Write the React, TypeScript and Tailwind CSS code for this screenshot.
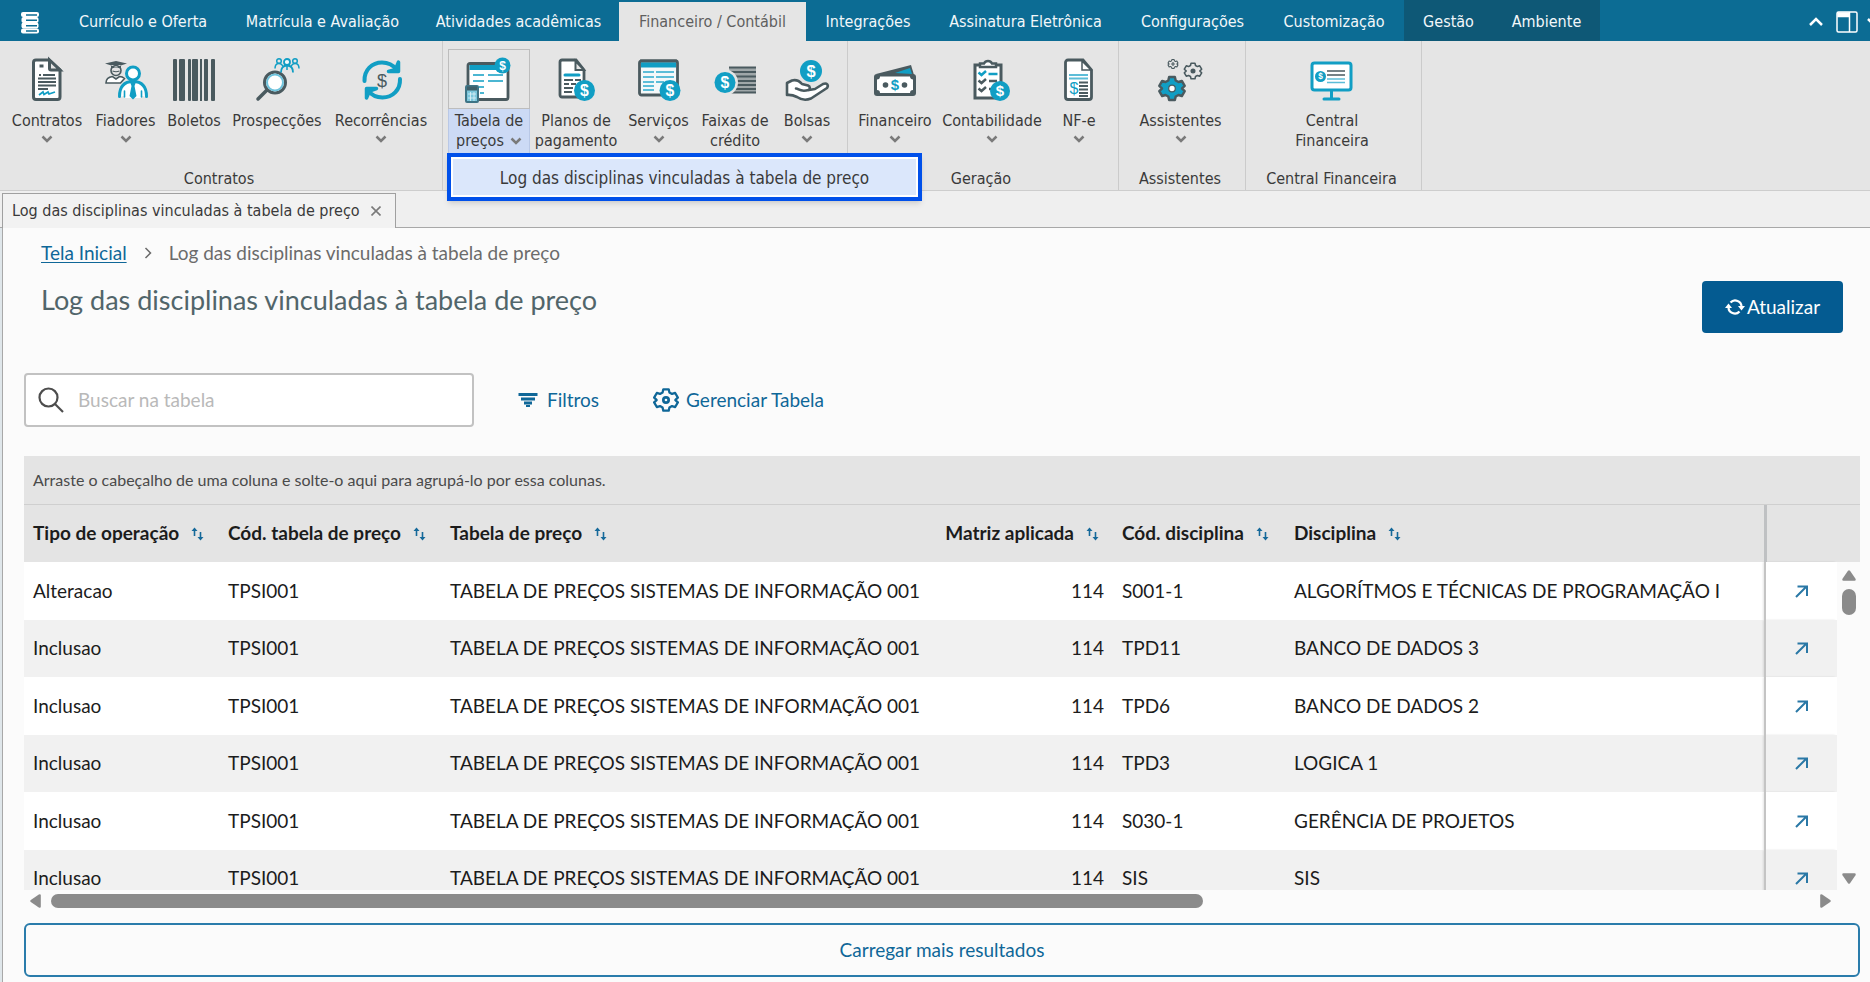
import React from 'react';

const DARK = '#4a5a5f';
const TEAL = '#119ec4';

interface CoinProps {
  cx: number;
  cy: number;
  r: number;
}

const Coin: React.FC<CoinProps> = ({ cx, cy, r }) => (
  <g>
    <circle cx={cx} cy={cy} r={r} fill={TEAL} />
    <text
      x={cx}
      y={cy + r * 0.52}
      fontSize={r * 1.5}
      fontWeight="bold"
      fill="#fff"
      textAnchor="middle"
      fontFamily="'Liberation Sans', sans-serif"
    >
      $
    </text>
  </g>
);

const IconBox: React.FC<{ children: React.ReactNode }> = ({ children }) => (
  <svg viewBox="0 0 44 44" className="h-11 w-11 overflow-visible" fill="none" aria-hidden="true">
    {children}
  </svg>
);

const ContractIcon = () => (
  <IconBox>
    <path d="M11 3h13l11 10v27a2.500 2.500 0 0 1-2.500 2.500H11A2.500 2.500 0 0 1 8.500 40V5.500A2.500 2.500 0 0 1 11 3z" fill="#fff" stroke={DARK} strokeWidth="3" />
    <path d="M24.500 3v8.500a1.500 1.500 0 0 0 1.500 1.500h9z" fill="#e5e5e5" stroke={DARK} strokeWidth="3" />
    <path d="M14.500 9h4" stroke={DARK} strokeWidth="3" />
    <path d="M14 18h2M18 18h12M13 21.500h18M13 25h18M13 28.500h18M13 32h10" stroke={DARK} strokeWidth="1.800" />
    <path d="M14 38l4-3 1 2.500 4-2.500 1 2 6-2" stroke={TEAL} strokeWidth="1.800" />
  </IconBox>
);

const GuarantorIcon = () => (
  <IconBox>
    <circle cx="12" cy="13.500" r="5" fill="#e5e5e5" stroke={DARK} strokeWidth="1.600" />
    <path d="M1 6.500L12 4l11 2.500L12 10zM7 8v4c3-2 7-2 10 0V8z" fill={DARK} />
    <path d="M8.500 14q3.500 1.500 7 0" stroke={DARK} strokeWidth="1.200" />
    <path d="M2 26c0-4.500 3-6 6.500-6.500l3.500 2.500 3.500-2.500c2 0 4 1 5 2l-4 4.500z" fill="#fff" stroke={DARK} strokeWidth="1.600" />
    <path d="M15.500 40c0-10 4-15.500 13.500-15.500S42.500 30 42.500 40l-4.500-1v2H20v-2z" fill="#fff" />
    <path d="M15.500 39.500c0-10 4-15 13.500-15s13.500 5 13.500 15" stroke={TEAL} strokeWidth="3" strokeLinecap="round" />
    <path d="M20.500 34v6M37.500 34v6" stroke={TEAL} strokeWidth="1.600" strokeLinecap="round" />
    <path d="M26 25h6l-1.500 4 2 10L29 42.500 25.500 39l2-10z" fill={TEAL} />
    <circle cx="29" cy="16.500" r="6.500" fill="#fff" stroke={TEAL} strokeWidth="3" />
  </IconBox>
);

const BarcodeIcon = () => (
  <IconBox>
    <g fill={DARK}>
      <rect x="1" y="2" width="4" height="42" rx="1" />
      <rect x="7" y="2" width="6" height="42" rx="1" />
      <rect x="16" y="2" width="3" height="42" rx="1" />
      <rect x="20" y="2" width="6" height="42" rx="1" />
      <rect x="28" y="2" width="2" height="42" />
      <rect x="32" y="2" width="4" height="42" rx="1" />
      <rect x="39" y="2" width="4" height="42" rx="1" />
    </g>
  </IconBox>
);

const ProspectIcon = () => (
  <IconBox>
    <path d="M3 42l9-9" stroke={DARK} strokeWidth="3.500" strokeLinecap="round" />
    <circle cx="20" cy="25.500" r="10.500" fill="#fff" stroke={DARK} strokeWidth="3" />
    <circle cx="20" cy="25.500" r="8" stroke="#6fc3dc" strokeWidth="2" />
    <g stroke={TEAL} strokeWidth="1.500">
      <circle cx="24" cy="4" r="2.300" />
      <path d="M20 11.500c0-3 1-5 4-5s3 1 4 3" />
      <circle cx="40" cy="4" r="2.300" />
      <path d="M44 11.500c0-3-1-5-4-5s-3 1-4 3" />
      <circle cx="32" cy="5" r="3" fill="#f4fbfd" strokeWidth="1.800" />
      <path d="M26 15.500c0-4.500 2-7 6-7s6 2.500 6 7" strokeWidth="1.800" />
      <path d="M32 9v4" />
    </g>
  </IconBox>
);

const RecurrenceIcon = () => (
  <IconBox>
    <path d="M5.500 24C5 13 13 5.500 23 5.500c6 0 11 2.500 14.500 7" stroke={TEAL} strokeWidth="4" strokeLinecap="round" />
    <path d="M41 22c.5 11-7.500 18.500-17.500 18.500-6 0-11-2.500-14.500-7" stroke={TEAL} strokeWidth="4" strokeLinecap="round" />
    <path d="M39.500 5v9.500h-10l7-2z" fill={TEAL} stroke={TEAL} strokeWidth="3.500" strokeLinejoin="round" />
    <path d="M7.500 41v-9.500h10l-7 2.500z" fill={TEAL} stroke={TEAL} strokeWidth="3.500" strokeLinejoin="round" />
    <text x="23" y="30" fontSize="18" fill={DARK} textAnchor="middle" fontFamily="'Liberation Sans', sans-serif">$</text>
  </IconBox>
);

const PriceTableIcon = () => (
  <IconBox>
    <rect x="1" y="6.500" width="40" height="36" rx="2" fill="#fff" stroke={DARK} strokeWidth="2.800" />
    <path d="M2.500 10.500h37" stroke={TEAL} strokeWidth="5" />
    <path d="M6 18h11M21 18h15M6 24h11M21 24h15M12 30h5M13 36h4" stroke={TEAL} strokeWidth="1.600" />
    <rect x="-1" y="29" width="12" height="16" rx="1" fill="#7cc7dc" stroke="#3e7485" strokeWidth="2" />
    <path d="M0 31.500h10" stroke="#3e5f69" strokeWidth="4" />
    <path d="M1 37h8M1 41h8M3.500 35v9M7 35v9" stroke="#dff3f8" strokeWidth="0.800" />
    <Coin cx={35.5} cy={8.5} r={8} />
  </IconBox>
);

const PaymentPlanIcon = () => (
  <IconBox>
    <path d="M8 3h14l8 10v25.500a1.500 1.500 0 0 1-1.500 1.500H8A2 2 0 0 1 6 38V5a2 2 0 0 1 2-2z" fill="#fff" stroke={DARK} strokeWidth="2.800" />
    <path d="M21.500 4v9H30z" fill="#e5e5e5" stroke={DARK} strokeWidth="2" />
    <path d="M11 18h14" stroke={TEAL} strokeWidth="3" strokeLinecap="round" />
    <path d="M10 23h9M21 23h6M10 27h5M17 27h5M10 31h9M10 35h8" stroke={DARK} strokeWidth="2" />
    <Coin cx={30.5} cy={33.5} r={10.5} />
  </IconBox>
);

const ServiceIcon = () => (
  <IconBox>
    <rect x="2.500" y="4" width="38" height="34" rx="2" fill="#f4f8f9" stroke={DARK} strokeWidth="2.800" />
    <path d="M3 4h37" stroke={DARK} strokeWidth="3" />
    <path d="M4 8h35" stroke={TEAL} strokeWidth="5" />
    <path d="M6 15h11M19 15h18M6 20h11M19 20h18M6 25h11M19 25h8M6 29h11M6 33h11" stroke="#5cbdd8" strokeWidth="1.800" />
    <Coin cx={33} cy={33.5} r={10.5} />
  </IconBox>
);

const CreditRangeIcon = () => (
  <IconBox>
    <path d="M16 10h27v26H18z" fill={DARK} opacity="0.450" />
    <path d="M16 10.500h27M16 15h27M16 19.500h27M16 24h27M16 28h27M16 32h27M16 35.500h27" stroke={DARK} strokeWidth="2.200" />
    <circle cx="12" cy="25.500" r="13" fill="#e5e5e5" />
    <Coin cx={12} cy={25.5} r={10.5} />
  </IconBox>
);

const ScholarshipIcon = () => (
  <IconBox>
    <path d="M2 38V26l5-2.500c4-1 7 0 10 3.500l6 1.500c2.500 1 2 3.500 1 4.500L30 32l8-5c4-1.500 6 1 4 4L26 41.500c-5 2-9 2-14-1.500-3-1.500-6-2.500-10-2z" fill="#fff" stroke={DARK} strokeWidth="2.600" strokeLinejoin="round" />
    <path d="M11 31.500c3 0 4 4 12.500 1.500" stroke={DARK} strokeWidth="2.600" strokeLinecap="round" />
    <Coin cx={26} cy={14} r={11} />
  </IconBox>
);

const FinanceIcon = () => (
  <IconBox>
    <path d="M3 17L38 8l3 10z" fill={DARK} />
    <path d="M22 16l15-5 2 6z" fill={TEAL} />
    <rect x="1" y="17" width="42" height="22" rx="3" fill={DARK} />
    <path d="M7 19.500h30c0 2 1.500 3 3 3v10.500c-2 0-3 1-3 3H7c0-2-1-3-3-3V22.500c2 0 3-1 3-3z" fill="#fff" />
    <circle cx="12.500" cy="28" r="2.800" fill={DARK} />
    <circle cx="31.500" cy="28" r="2.800" fill={DARK} />
    <text x="22" y="33" fontSize="15" fontWeight="bold" fill={TEAL} textAnchor="middle" fontFamily="'Liberation Sans', sans-serif">$</text>
  </IconBox>
);

const AccountingIcon = () => (
  <IconBox>
    <rect x="5" y="8" width="26" height="33" fill="#fff" stroke={DARK} strokeWidth="3" />
    <path d="M10 10V6.500h4a4.500 4.500 0 0 1 8 0h4V10z" fill="#fff" stroke={DARK} strokeWidth="2.500" />
    <path d="M18.500 17h9" stroke={TEAL} strokeWidth="2.500" />
    <path d="M8.500 15.500L11.500 18l4.500-4" stroke={TEAL} strokeWidth="2.500" />
    <path d="M8.500 23.500l3 2.500 4.500-4M8.500 31.500l3 2.500 4.500-4M19 24h8M19 32h3" stroke={DARK} strokeWidth="2.500" />
    <Coin cx={30} cy={34} r={10} />
  </IconBox>
);

const InvoiceIcon = () => (
  <IconBox>
    <path d="M11 3h15l8.500 10v27a2.500 2.500 0 0 1-2.500 2.500H11A2.500 2.500 0 0 1 8.500 40V5.500A2.500 2.500 0 0 1 11 3z" fill="#fff" stroke={DARK} strokeWidth="2.800" />
    <path d="M25 4v9h9z" fill="#fff" stroke={DARK} strokeWidth="1.500" />
    <path d="M12 18h19M12 21.500h19" stroke="#5cbdd8" strokeWidth="2" />
    <path d="M22 25.500h9M22 29h9M22 32.500h9M22 36h9M22 39h9" stroke={DARK} strokeWidth="1.800" />
    <text x="17" y="36.500" fontSize="16" fill={TEAL} textAnchor="middle" fontFamily="'Liberation Sans', sans-serif">$</text>
  </IconBox>
);

const GEAR =
  'M-3.500-14h7l1 4.200 3.400 1.900 4.100-1.300 3.500 6-3.200 3v.4l3.200 3-3.500 6-4.100-1.300L4.500 9.800l-1 4.200h-7l-1-4.200-3.400-1.900-4.100 1.300-3.500-6 3.200-3v-.4l-3.200-3 3.500-6 4.100 1.300 3.400-1.900z';

const AssistantIcon = () => (
  <IconBox>
    <g transform="translate(13 31.500) scale(.82)">
      <path d={GEAR} fill={TEAL} stroke={DARK} strokeWidth="3" strokeLinejoin="round" />
      <circle r="4" fill="#fff" stroke={DARK} strokeWidth="1.500" />
    </g>
    <g transform="translate(34 14) scale(.56)">
      <path d={GEAR} fill="#e5e5e5" stroke={DARK} strokeWidth="2.800" strokeLinejoin="round" />
      <circle r="4.500" fill={DARK} />
    </g>
    <g transform="translate(14 7) scale(.32)">
      <path d={GEAR} stroke={DARK} strokeWidth="3.500" strokeLinejoin="round" />
      <path d="M-6 0H6M0-6V6" stroke={DARK} strokeWidth="3.500" />
    </g>
  </IconBox>
);

const FinancialCenterIcon = () => (
  <IconBox>
    <rect x="2" y="6" width="39" height="27" rx="2.500" fill="#fff" stroke={TEAL} strokeWidth="3" />
    <path d="M21.500 34v8M14 42h15" stroke={TEAL} strokeWidth="3" strokeLinecap="round" />
    <path d="M17 14h18M17 18h18" stroke={DARK} strokeWidth="1.600" />
    <path d="M17 22h18M17 25.500h18" stroke="#5cbdd8" strokeWidth="1.600" />
    <Coin cx={10.5} cy={19.500} r={5.500} />
  </IconBox>
);

const ChevronDown: React.FC<{ className?: string }> = ({ className = '' }) => (
  <svg viewBox="0 0 12 8" className={`h-2 w-3 ${className}`} fill="none" stroke="#7a7a7a" strokeWidth="2.500" aria-hidden="true">
    <path d="M1.500 1.500L6 6l4.500-4.500" />
  </svg>
);

interface RibbonItem {
  lines: string[];
  icon: React.FC;
  menu?: boolean;
  width: string;
}

interface RibbonGroup {
  label: string;
  width: string;
  items: RibbonItem[];
}

const menuTabs = [
  { label: 'Currículo e Oferta', width: 'w-[168px]' },
  { label: 'Matrícula e Avaliação', width: 'w-[191px]' },
  { label: 'Atividades acadêmicas', width: 'w-[201px]' },
  { label: 'Financeiro / Contábil', width: 'w-[187px]', active: true },
  { label: 'Integrações', width: 'w-[124px]' },
  { label: 'Assinatura Eletrônica', width: 'w-[191px]' },
  { label: 'Configurações', width: 'w-[143px]' },
  { label: 'Customização', width: 'w-[140px]' },
];

const groups: RibbonGroup[] = [
  {
    label: 'Contratos',
    width: 'w-[443px]',
    items: [
      { lines: ['Contratos'], icon: ContractIcon, menu: true, width: 'w-[84px]' },
      { lines: ['Fiadores'], icon: GuarantorIcon, menu: true, width: 'w-[73px]' },
      { lines: ['Boletos'], icon: BarcodeIcon, width: 'w-[64px]' },
      { lines: ['Prospecções'], icon: ProspectIcon, width: 'w-[102px]' },
      { lines: ['Recorrências'], icon: RecurrenceIcon, menu: true, width: 'w-[106px]' },
    ],
  },
  {
    label: '',
    width: 'w-[405px]',
    items: [
      { lines: ['Tabela de', 'preços'], icon: PriceTableIcon, menu: true, width: 'w-[82px]' },
      { lines: ['Planos de', 'pagamento'], icon: PaymentPlanIcon, width: 'w-[92px]' },
      { lines: ['Serviços'], icon: ServiceIcon, menu: true, width: 'w-[73px]' },
      { lines: ['Faixas de', 'crédito'], icon: CreditRangeIcon, width: 'w-[80px]' },
      { lines: ['Bolsas'], icon: ScholarshipIcon, menu: true, width: 'w-[64px]' },
    ],
  },
  {
    label: 'Geração',
    width: 'w-[271px]',
    items: [
      { lines: ['Financeiro'], icon: FinanceIcon, menu: true, width: 'w-[84px]' },
      { lines: ['Contabilidade'], icon: AccountingIcon, menu: true, width: 'w-[110px]' },
      { lines: ['NF-e'], icon: InvoiceIcon, menu: true, width: 'w-[64px]' },
    ],
  },
  {
    label: 'Assistentes',
    width: 'w-[127px]',
    items: [{ lines: ['Assistentes'], icon: AssistantIcon, menu: true, width: 'w-[106px]' }],
  },
  {
    label: 'Central Financeira',
    width: 'w-[176px]',
    items: [{ lines: ['Central', 'Financeira'], icon: FinancialCenterIcon, width: 'w-[84px]' }],
  },
];

const PRICE_TABLE = 'TABELA DE PREÇOS SISTEMAS DE INFORMAÇÃO 001';

const rows = [
  { type: 'Alteracao', code: 'S001-1', subject: 'ALGORÍTMOS E TÉCNICAS DE PROGRAMAÇÃO I' },
  { type: 'Inclusao', code: 'TPD11', subject: 'BANCO DE DADOS 3' },
  { type: 'Inclusao', code: 'TPD6', subject: 'BANCO DE DADOS 2' },
  { type: 'Inclusao', code: 'TPD3', subject: 'LOGICA 1' },
  { type: 'Inclusao', code: 'S030-1', subject: 'GERÊNCIA DE PROJETOS' },
  { type: 'Inclusao', code: 'SIS', subject: 'SIS' },
];

const columns = ['Tipo de operação', 'Cód. tabela de preço', 'Tabela de preço', 'Matriz aplicada', 'Cód. disciplina', 'Disciplina'];

const RibbonButton: React.FC<{ item: RibbonItem; open?: boolean }> = ({ item, open }) => {
  const Icon = item.icon;
  return (
    <button type="button" className={`flex h-full shrink-0 flex-col ${item.width}`}>
      <span className={`flex h-15 w-full items-center justify-center border ${open ? 'border-[#bdbdbd]' : 'border-transparent'}`}>
        <Icon />
      </span>
      <span className={`flex h-11 w-full flex-col items-center whitespace-nowrap pt-0.5 leading-5 ${open ? 'border-x border-[#b9c8e6] bg-[#ccdaf5]' : ''}`}>
        {item.lines.map((line, i) => (
          <span key={line} className="flex items-center gap-1.5">
            {line}
            {item.menu && i === 1 && <ChevronDown />}
          </span>
        ))}
        {item.menu && item.lines.length === 1 && <ChevronDown className="mt-1" />}
      </span>
    </button>
  );
};

const SortIcon = () => (
  <svg viewBox="0 0 13 14" className="h-3.5 w-[13px] shrink-0" fill="#15699a" stroke="#15699a" strokeWidth="1.600" aria-hidden="true">
    <path d="M3.500 9V2.500M9.500 5v6.500" />
    <path d="M3.500.5l3 3.500h-6zM9.500 13.500l3-3.500h-6z" stroke="none" />
  </svg>
);

const TopBar = () => (
  <header className="flex h-[41px] items-stretch overflow-hidden bg-[#0c6c94] text-[#f2f7fa]">
    <div className="flex w-[59px] shrink-0 items-center pl-5">
      <svg viewBox="0 0 20 22" className="mt-1 h-[22px] w-5" aria-hidden="true">
        <g fill="#fff">
          <rect x="1" y="0" width="18" height="5" rx="2" />
          <rect x="1.500" y="5" width="17" height="6" rx="2" />
          <rect x="1.500" y="10.500" width="17" height="6" rx="2" />
          <rect x="1" y="16.500" width="18" height="5" rx="2" />
        </g>
        <path d="M6 3h11M6 8.300h11M6 13.700h11M6 19h11" stroke="#0c6c94" strokeWidth="1.600" />
      </svg>
    </div>
    <nav className="flex">
      {menuTabs.map((tab) => (
        <button
          key={tab.label}
          type="button"
          className={`shrink-0 whitespace-nowrap ${tab.width} ${tab.active ? 'mt-0.5 bg-[#e5e5e5] text-[#5f5f5f]' : 'pt-0.5'}`}
        >
          {tab.label}
        </button>
      ))}
      <div className="flex shrink-0 bg-[#0e5876]">
        <button type="button" className="w-[89px] pt-0.5">Gestão</button>
        <button type="button" className="w-[107px] pt-0.5">Ambiente</button>
      </div>
    </nav>
    <div className="-mr-3 ml-auto flex shrink-0 items-center gap-3 pt-0.5">
      <button type="button" aria-label="Recolher">
        <svg viewBox="0 0 16 10" className="h-2.5 w-4" fill="none" stroke="#fff" strokeWidth="2.500"><path d="M2 8l6-6 6 6" /></svg>
      </button>
      <button type="button" aria-label="Layout">
        <svg viewBox="0 0 22 22" className="h-[22px] w-[22px]" fill="none" stroke="#fff" strokeWidth="1.500">
          <rect x="1" y="1" width="20" height="20" rx="1.500" />
          <path d="M13.500 1v20" />
          <path d="M2 2h11v3.500H2z" fill="#fff" />
        </svg>
      </button>
      <button type="button" aria-label="Mais" className="-ml-1">
        <svg viewBox="0 0 16 10" className="h-2.5 w-4" fill="none" stroke="#fff" strokeWidth="2.500"><path d="M2 2l6 6 6-6" /></svg>
      </button>
    </div>
  </header>
);

const Ribbon = () => (
  <div className="flex h-[150px] border-b border-[#cdcdcd] bg-[#e5e5e5]">
    {groups.map((group, g) => (
      <section key={group.width} className={`relative flex shrink-0 flex-col border-r border-[#cbcbcb] pt-2 ${group.width}`}>
        <div className={`flex h-26 pl-[5px] pr-2 ${group.items.length === 1 ? 'justify-center' : ''}`}>
          {group.items.map((item) => (
            <RibbonButton key={item.lines[0]} item={item} open={item.icon === PriceTableIcon} />
          ))}
        </div>
        <p className="mt-4 pr-1 text-center leading-5">{group.label}</p>
        {g === 1 && (
          <div className="absolute left-1 top-28 z-10 w-[475px] border-4 border-[#0050ea] bg-white p-0.5 shadow-md">
            <button type="button" className="h-9 w-full bg-[#dbe7fb] pt-1 text-[17px]">
              Log das disciplinas vinculadas à tabela de preço
            </button>
          </div>
        )}
      </section>
    ))}
  </div>
);

const LogTable = () => (
  <div className="text-[19px] text-[#1c1c1c]">
    <p className="flex h-[49px] items-center border-b border-[#cfcfcf] bg-[#e4e4e4] px-[9px] text-base text-[#4a4a4a]">
      Arraste o cabeçalho de uma coluna e solte-o aqui para agrupá-lo por essa colunas.
    </p>
    <div className="flex h-[385px] overflow-hidden bg-[#fbfbfb]">
      <table className="w-full table-fixed self-start border-collapse whitespace-nowrap">
        <colgroup>
          <col className="w-[195px]" />
          <col className="w-[222px]" />
          <col className="w-[493px]" />
          <col className="w-[179px]" />
          <col className="w-[172px]" />
          <col />
          <col className="w-[72px]" />
        </colgroup>
        <thead className="bg-[#e4e4e4]">
          <tr className="h-[57px]">
            {columns.map((column, i) => (
              <th key={column} className={`pl-[9px] text-left font-bold ${i === 3 ? 'pr-3.5' : 'pr-[9px]'}`}>
                <button type="button" className={`flex items-center gap-3 ${i === 3 ? 'ml-auto' : ''}`}>
                  {column}
                  <SortIcon />
                </button>
              </th>
            ))}
            <th className="border-l-3 border-[#bfc1c3]" aria-label="Ações" />
          </tr>
        </thead>
        <tbody>
          {rows.map((row, i) => (
            <tr key={i} className="h-[58px] bg-white even:h-[57px] even:bg-[#f1f1f1]">
              <td className="px-[9px]">{row.type}</td>
              <td className="px-[9px]">TPSI001</td>
              <td className="px-[9px]">{PRICE_TABLE}</td>
              <td className="px-[9px] text-right">114</td>
              <td className="px-[9px]">{row.code}</td>
              <td className="px-[9px]">{row.subject}</td>
              <td className="border-l-2 border-[#c4c4c4] text-center shadow-[-2px_0_2px_#0000001a]">
                <button type="button" aria-label="Abrir registro">
                  <svg viewBox="0 0 13 13" className="h-[13px] w-[13px]" fill="none" stroke="#2a78a6" strokeWidth="2"><path d="M1 12L11.500 1.500M2.500 1.500h9.500v9.500" /></svg>
                </button>
              </td>
            </tr>
          ))}
        </tbody>
      </table>
      <div className="flex w-[23px] shrink-0 flex-col items-center">
        <div className="h-[57px] w-full bg-[#e4e4e4]" />
        <svg viewBox="0 0 14 11" className="mt-2 h-[11px] w-3.5" fill="#8b8b8b" aria-hidden="true"><path d="M6 .8q1-1.200 2 0l5.500 8q.8 2-1 2h-11q-1.800 0-1-2z" /></svg>
        <div className="mt-2 h-[26px] w-3.5 rounded-full bg-[#8b8b8b]" />
        <svg viewBox="0 0 14 11" className="mb-1.5 mt-auto h-[11px] w-3.5" fill="#8b8b8b" aria-hidden="true"><path d="M6 10.200q1 1.200 2 0l5.500-8q.8-2-1-2h-11q-1.800 0-1 2z" /></svg>
      </div>
    </div>
    <div className="mr-[23px] flex h-[22px] items-center gap-2.5 px-1.5">
      <svg viewBox="0 0 11 14" className="h-3.5 w-[11px]" fill="#8b8b8b" aria-hidden="true"><path d="M.8 6q-1.200 1 0 2l8 5.500q2 .8 2-1v-11q0-1.800-2-1z" /></svg>
      <div className="flex-1">
        <div className="h-3.5 w-[65.500%] rounded-full bg-[#8b8b8b]" />
      </div>
      <svg viewBox="0 0 11 14" className="h-3.5 w-[11px]" fill="#8b8b8b" aria-hidden="true"><path d="M10.200 6q1.200 1 0 2l-8 5.500q-2 .8-2-1v-11q0-1.800 2-1z" /></svg>
    </div>
  </div>
);

const App: React.FC = () => (
  <div className="min-h-screen overflow-x-hidden bg-[#dfe6ea] font-['DejaVu_Sans_Condensed','DejaVu_Sans',sans-serif] text-[16px] text-[#3a3a3a]">
    <TopBar />
    <Ribbon />
    <div className="flex h-[37px] items-end border-b border-[#a8a8a8] bg-[#efefef] pl-0.5">
      <div className="-mb-px flex h-[35px] w-[394px] items-center justify-between border border-b-0 border-[#a0a0a0] bg-[#f2f2f2] pl-[9px] pr-3.5">
        <span>Log das disciplinas vinculadas à tabela de preço</span>
        <button type="button" aria-label="Fechar aba">
          <svg viewBox="0 0 10 10" className="h-2.5 w-2.5" stroke="#7a7a7a" strokeWidth="1.600"><path d="M.5.5l9 9M9.500.5l-9 9" /></svg>
        </button>
      </div>
    </div>
    <main className="ml-0.5 border-l border-[#a8a8a8] bg-[#fbfbfb] pb-[5px] pl-[21px] pr-2.5 font-['Lato',sans-serif] text-[19px]">
      <div className="flex items-start justify-between px-[17px] pt-[11px]">
        <div>
          <nav className="flex items-center text-[#6b6b6b]">
            <a href="#inicio" className="text-[#0f6798] underline underline-offset-2">Tela Inicial</a>
            <svg viewBox="0 0 8 12" className="mx-[17px] h-3 w-2" fill="none" stroke="#6b6b6b" strokeWidth="1.500" aria-hidden="true"><path d="M1.500 1l5 5-5 5" /></svg>
            <span>Log das disciplinas vinculadas à tabela de preço</span>
          </nav>
          <h1 className="mt-3 text-[27px] text-[#51656a]">Log das disciplinas vinculadas à tabela de preço</h1>
        </div>
        <button type="button" className="mt-[42px] flex h-13 w-[141px] items-center justify-center gap-0.5 rounded bg-[#045b91] text-white">
          <svg viewBox="0 0 20 16" className="h-4 w-5" fill="none" stroke="#fff" strokeWidth="2.200" aria-hidden="true">
            <path d="M5.500 3.600A6.300 6.300 0 0 1 16.500 8M14.500 12.400A6.300 6.300 0 0 1 3.500 8" />
            <path d="M0 9l3.500-4.500L7 9zM13 7h7l-3.500 4.500z" fill="#fff" stroke="none" />
          </svg>
          Atualizar
        </button>
      </div>
      <div className="mt-10 flex items-center text-[#0f6798]">
        <label className="flex h-[54px] w-[450px] items-center gap-3.5 rounded border-2 border-[#c2c2c2] bg-white px-3">
          <svg viewBox="0 0 26 26" className="h-[26px] w-[26px] shrink-0" fill="none" stroke="#4d4d4d" strokeWidth="2.200" aria-hidden="true">
            <circle cx="10.500" cy="10.500" r="9" />
            <path d="M17 17l8 8" />
          </svg>
          <input type="text" aria-label="Buscar na tabela" placeholder="Buscar na tabela" className="w-full bg-transparent outline-none placeholder:text-[#b9b9b9]" />
        </label>
        <button type="button" className="ml-11 flex items-center gap-[9px]">
          <svg viewBox="0 0 20 14" className="h-3.5 w-5" stroke="#0f6798" strokeWidth="3" aria-hidden="true"><path d="M.5 1.500h19M3 6h14M6 10h8M8 13.500h4" /></svg>
          Filtros
        </button>
        <button type="button" className="ml-[54px] flex items-center gap-[7px]">
          <svg viewBox="-17 -17 34 34" className="h-[26px] w-[26px]" fill="none" stroke="#0f6798" aria-hidden="true">
            <path d={GEAR} strokeWidth="3" strokeLinejoin="round" />
            <circle r="3.500" strokeWidth="3.500" />
          </svg>
          Gerenciar Tabela
        </button>
      </div>
      <div className="mt-[29px]">
        <LogTable />
      </div>
      <button type="button" className="mt-[11px] h-[54px] w-full rounded-md border-2 border-[#2a7cab] text-[#0f6798]">
        Carregar mais resultados
      </button>
    </main>
  </div>
);

export default App;
